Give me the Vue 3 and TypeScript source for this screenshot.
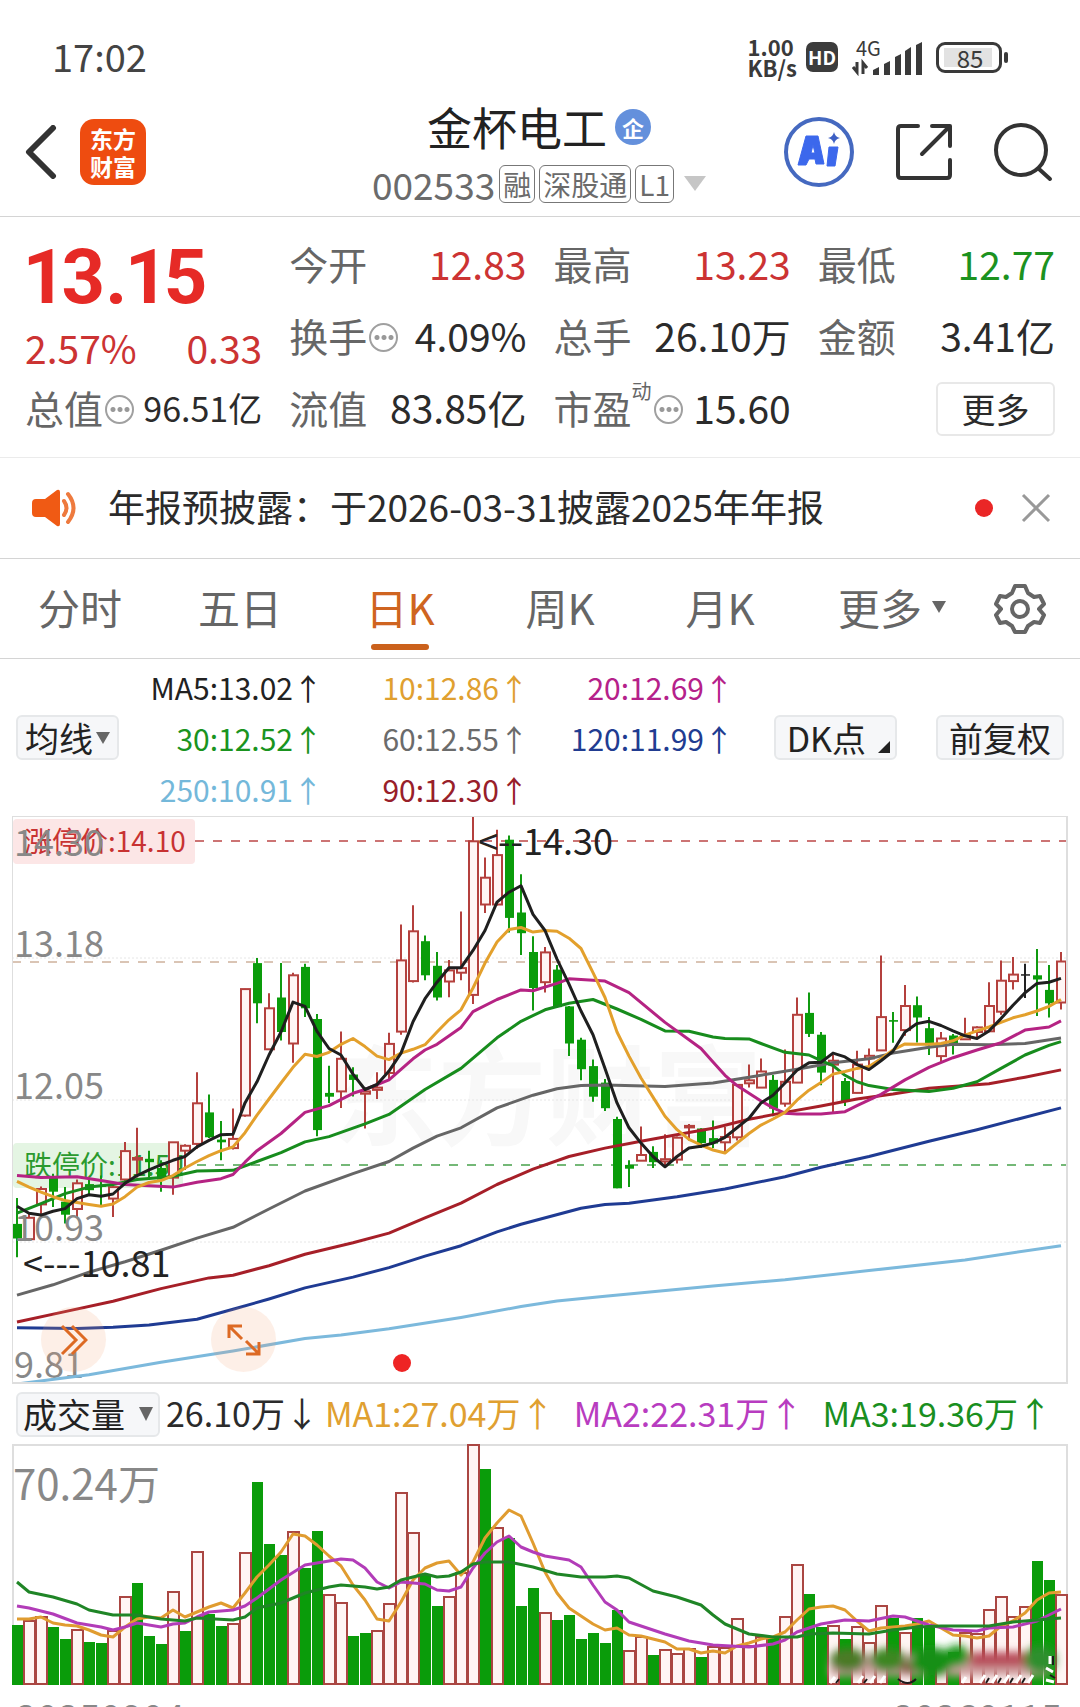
<script setup lang="ts">
type Candle = [number, number, number, number, 'r' | 'g' | 'k']
type Pt = [number, number]

const STEP = 12
const FIRST = 5

// Candle rows: high, body top, body bottom, low, kind (in plot units, 41 = top edge, 1524 = bottom edge)
const candles: Candle[] = [
  [1038, 1106, 1144, 1193, 'g'], [1075, 1090, 1146, 1148, 'r'], [1008, 1015, 1055, 1080, 'r'], [975, 985, 1022, 1062, 'g'],
  [1010, 1048, 1082, 1105, 'g'], [990, 1000, 1067, 1090, 'r'], [985, 1002, 1018, 1030, 'g'], [980, 1005, 1009, 1058, 'g'],
  [1005, 1010, 1040, 1088, 'r'], [892, 916, 990, 1000, 'r'], [855, 934, 938, 985, 'r'], [915, 936, 945, 985, 'g'],
  [940, 960, 990, 1022, 'g'], [892, 893, 985, 1030, 'r'], [898, 902, 915, 965, 'r'], [710, 791, 897, 910, 'r'],
  [768, 815, 880, 882, 'g'], [837, 886, 893, 940, 'g'], [805, 884, 908, 912, 'r'], [492, 493, 823, 826, 'r'],
  [412, 425, 530, 582, 'g'], [504, 543, 650, 652, 'r'], [425, 515, 605, 627, 'g'], [450, 457, 635, 685, 'r'],
  [427, 435, 543, 566, 'g'], [558, 571, 861, 877, 'g'], [693, 764, 774, 790, 'g'], [604, 675, 760, 803, 'r'],
  [697, 716, 730, 773, 'g'], [755, 760, 766, 857, 'r'], [710, 750, 756, 780, 'r'], [607, 636, 712, 730, 'r'],
  [324, 418, 604, 612, 'r'], [274, 342, 472, 476, 'r'], [353, 368, 457, 470, 'g'], [396, 432, 515, 523, 'g'],
  [417, 444, 473, 514, 'r'], [290, 438, 450, 470, 'r'], [41, 107, 508, 532, 'r'], [149, 202, 272, 294, 'r'],
  [77, 143, 272, 275, 'r'], [92, 103, 307, 345, 'g'], [193, 293, 347, 404, 'g'], [355, 396, 490, 549, 'g'],
  [383, 397, 475, 502, 'r'], [430, 442, 540, 541, 'g'], [537, 538, 635, 668, 'g'], [620, 625, 702, 731, 'g'],
  [677, 694, 774, 787, 'g'], [728, 737, 804, 811, 'g'], [826, 832, 1013, 1013, 'g'], [940, 952, 962, 1010, 'g'],
  [852, 926, 941, 941, 'r'], [903, 918, 945, 960, 'g'], [872, 937, 943, 955, 'r'], [878, 881, 938, 948, 'r'],
  [845, 850, 854, 888, 'r'], [856, 857, 895, 908, 'g'], [836, 882, 896, 908, 'g'], [853, 879, 893, 918, 'r'],
  [742, 743, 880, 888, 'r'], [690, 731, 739, 750, 'r'], [674, 708, 750, 751, 'r'], [717, 730, 805, 825, 'g'],
  [651, 735, 792, 800, 'r'], [515, 560, 737, 738, 'r'], [502, 555, 610, 618, 'g'], [605, 612, 711, 744, 'g'],
  [665, 680, 690, 815, 'r'], [725, 733, 787, 798, 'g'], [654, 690, 764, 765, 'r'], [648, 667, 674, 695, 'r'],
  [405, 566, 653, 654, 'r'], [553, 574, 578, 633, 'g'], [482, 537, 600, 615, 'r'], [512, 535, 567, 632, 'g'],
  [566, 595, 640, 665, 'g'], [605, 622, 668, 684, 'r'], [610, 614, 640, 664, 'g'], [568, 612, 624, 626, 'r'],
  [590, 593, 605, 624, 'r'], [475, 537, 603, 605, 'r'], [418, 471, 552, 560, 'r'], [409, 455, 472, 494, 'r'],
  [427, 454, 458, 516, 'k'], [388, 457, 468, 563, 'g'], [430, 495, 530, 567, 'g'], [396, 421, 528, 546, 'r'],
]

const seq = (vals: number[]): Pt[] => vals.map((v, i): Pt => [i, v])

const averages: { color: string; pts: Pt[] }[] = [
  { color: '#7cb9dc', pts: [[0, 1524], [6, 1500], [12, 1467], [18, 1438], [24, 1405], [27, 1396], [31, 1380], [37, 1350], [42, 1322], [45, 1307], [49, 1295], [58, 1268], [64, 1252], [71, 1228], [79, 1200], [87, 1163]] },
  { color: '#1f3b93', pts: [[0, 1377], [5, 1379], [8, 1376], [11, 1370], [15, 1355], [18, 1329], [21, 1302], [24, 1273], [28, 1245], [31, 1220], [34, 1190], [37, 1163], [40, 1127], [42, 1107], [47, 1065], [49, 1055], [51, 1052], [55, 1035], [59, 1015], [64, 983], [67, 958], [71, 930], [76, 890], [80, 860], [87, 803]] },
  { color: '#a61f28', pts: [[0, 1362], [4, 1335], [8, 1308], [12, 1275], [16, 1247], [18, 1240], [21, 1215], [24, 1185], [28, 1155], [31, 1130], [34, 1090], [37, 1052], [40, 1003], [43, 963], [46, 930], [49, 908], [52, 890], [56, 867], [58, 856], [61, 833], [64, 815], [67, 798], [70, 780], [73, 767], [76, 752], [81, 740], [84, 723], [87, 704]] },
  { color: '#666666', pts: [[0, 1292], [3, 1265], [6, 1232], [9, 1205], [12, 1175], [15, 1143], [18, 1115], [21, 1067], [24, 1020], [28, 975], [31, 943], [33, 908], [35, 877], [37, 855], [40, 803], [43, 770], [45, 753], [47, 745], [49, 743], [54, 747], [58, 738], [61, 723], [65, 702], [68, 685], [71, 675], [73, 660], [76, 645], [78, 637], [81, 638], [84, 635], [87, 621]] },
  { color: '#178c1d', pts: [[0, 1078], [2, 1053], [4, 1027], [6, 1010], [8, 1003], [10, 990], [12, 985], [13, 982], [15, 968], [18, 966], [20, 943], [22, 920], [24, 892], [26, 878], [29, 845], [31, 820], [34, 755], [37, 700], [40, 620], [42, 577], [44, 547], [46, 530], [48, 520], [50, 545], [52, 572], [54, 602], [56, 603], [58, 618], [59, 622], [61, 623], [62, 635], [64, 658], [66, 665], [67, 680], [68, 693], [69, 718], [70, 735], [71, 745], [73, 755], [76, 760], [78, 752], [80, 735], [82, 700], [84, 665], [86, 640], [87, 630]] },
  { color: '#b52383', pts: [[0, 980], [2, 985], [5, 983], [7, 993], [9, 1003], [13, 1010], [15, 997], [17, 988], [18, 977], [19, 945], [20, 915], [22, 870], [24, 815], [26, 797], [28, 765], [29, 755], [31, 730], [33, 675], [34, 652], [35, 637], [37, 593], [38, 552], [40, 520], [42, 495], [43, 497], [45, 478], [46, 466], [49, 472], [51, 502], [54, 580], [56, 625], [57, 648], [58, 683], [59, 718], [60, 745], [61, 765], [62, 785], [63, 803], [64, 817], [65, 819], [67, 819], [69, 813], [70, 797], [72, 768], [74, 730], [76, 697], [78, 672], [80, 652], [82, 633], [84, 600], [86, 592], [87, 576]] },
  { color: '#e3a02c', pts: seq([995, 1010, 1023, 1035, 1045, 1050, 1055, 1060, 1054, 1035, 1010, 998, 993, 980, 960, 943, 928, 915, 905, 868, 822, 780, 738, 697, 663, 669, 658, 637, 622, 643, 668, 677, 660, 650, 638, 605, 573, 547, 490, 425, 370, 337, 332, 344, 340, 342, 360, 387, 450, 515, 605, 668, 725, 775, 825, 860, 885, 900, 913, 921, 895, 870, 848, 832, 815, 783, 757, 737, 715, 708, 700, 695, 675, 652, 636, 637, 637, 635, 628, 613, 602, 592, 580, 568, 560, 550, 538, 520]) },
  { color: '#1f1f1f', pts: seq([1060, 1078, 1083, 1073, 1066, 1040, 1030, 1034, 1028, 1000, 980, 965, 952, 940, 930, 905, 888, 873, 872, 790, 735, 665, 605, 527, 538, 603, 648, 665, 715, 755, 742, 707, 660, 578, 518, 475, 437, 437, 392, 340, 266, 240, 223, 298, 340, 415, 480, 550, 612, 700, 790, 855, 895, 930, 957, 930, 908, 903, 895, 880, 855, 830, 790, 770, 738, 705, 685, 684, 660, 670, 690, 703, 680, 655, 605, 583, 577, 588, 602, 615, 622, 602, 570, 535, 503, 478, 475, 465]) },
]

const volumes =
  'g735 r722 r712 g740 g778 r750 g787 g790 r752 r650 g610 g768 g792 r637 g753 r517 g703 g737 r732 r520 g305 g492 g525 r457 g565 g453 r646 r669 g768 g758 r752 r673 r338 r460 g582 g678 r650 r580 r195 g267 r444 g473 g678 g625 r700 g721 g705 g778 g758 g790 g690 r813 r770 g825 r810 r823 r808 g832 r800 r805 r718 r797 r772 g770 r710 r554 g641 g740 r737 g778 r740 r790 r679 g715 r760 g714 g738 r850 g815 r760 r763 r690 r650 r712 r682 g543 g600 r645'
    .split(' ')
    .map((s) => ({ up: s[0] === 'r', v: Number(s.slice(1)) }))

const volumeLines: { color: string; pts: Pt[] }[] = [
  { color: '#e09c30', pts: seq([717, 716, 710, 730, 735, 738, 750, 765, 770, 740, 718, 712, 713, 690, 710, 695, 682, 670, 685, 640, 590, 555, 515, 462, 468, 495, 527, 557, 615, 660, 716, 724, 665, 600, 563, 548, 542, 585, 545, 475, 430, 390, 408, 490, 575, 638, 683, 707, 732, 749, 743, 765, 768, 777, 785, 806, 808, 820, 814, 818, 797, 790, 778, 770, 755, 720, 687, 682, 677, 690, 722, 752, 745, 740, 737, 732, 723, 745, 765, 769, 774, 767, 738, 722, 700, 660, 640, 635]) },
  { color: '#b23cb8', pts: [[0, 679], [1, 683], [3, 702], [5, 728], [7, 742], [8, 750], [9, 742], [10, 730], [12, 740], [13, 732], [14, 728], [15, 710], [16, 697], [18, 690], [19, 678], [20, 655], [22, 600], [24, 555], [26, 543], [27, 536], [28, 540], [29, 565], [30, 607], [31, 624], [32, 607], [34, 612], [35, 630], [36, 632], [37, 622], [38, 565], [39, 520], [40, 487], [41, 467], [42, 500], [43, 515], [44, 528], [46, 540], [47, 560], [48, 615], [49, 667], [50, 690], [51, 725], [52, 738], [54, 762], [56, 782], [58, 795], [61, 800], [63, 792], [64, 780], [65, 757], [67, 732], [69, 720], [71, 722], [73, 708], [74, 712], [76, 735], [78, 750], [80, 752], [81, 745], [83, 740], [85, 722], [87, 687]] },
  { color: '#1f8526', pts: [[0, 607], [1, 635], [3, 652], [5, 672], [6, 690], [8, 706], [10, 705], [12, 717], [14, 723], [15, 715], [18, 720], [19, 710], [20, 685], [22, 668], [23, 655], [24, 640], [26, 622], [27, 614], [29, 620], [30, 627], [31, 622], [32, 600], [33, 592], [34, 582], [35, 590], [36, 588], [37, 577], [38, 553], [39, 545], [41, 547], [43, 560], [45, 582], [47, 590], [49, 592], [50, 588], [51, 595], [53, 632], [55, 652], [57, 675], [58, 705], [59, 732], [61, 762], [63, 770], [65, 770], [66, 763], [68, 758], [71, 762], [73, 750], [75, 740], [77, 738], [81, 738], [83, 725], [85, 720], [87, 715]] },
]

const cx = (i: number) => FIRST + i * STEP
const py = (v: number) => Math.round(((v - 41) * 568) / 148.3) / 10
const vy = (v: number) => Math.round((v - 192) / 3)
const path = (pts: Pt[], fy: (v: number) => number) => pts.map(([i, v]) => `${cx(i)},${fy(v)}`).join(' ')

const tabs = ['分时', '五日', '日K', '周K', '月K', '更多']
const maItems = [
  { text: 'MA5:13.02', color: '#222222' },
  { text: '10:12.86', color: '#e0a030' },
  { text: '20:12.69', color: '#b5218a' },
  { text: '30:12.52', color: '#1a941f' },
  { text: '60:12.55', color: '#6b6b6b' },
  { text: '120:11.99', color: '#213c91' },
  { text: '250:10.91', color: '#74b8da' },
  { text: '90:12.30', color: '#98202a' },
]
</script>

<template>
  <div class="app">
    <header class="status">
      <span class="clock">17:02</span>
      <div class="status-right">
        <span class="speed">1.00<br />KB/s</span>
        <span class="hd">HD</span>
        <svg class="signal" width="70" height="38" viewBox="0 0 70 38" aria-hidden="true">
          <text x="4" y="18" font-size="20" fill="#3a3a3a">4G</text>
          <path d="M5 24v10l-4-5M11 36V25l4 5" fill="none" stroke="#3a3a3a" stroke-width="3" />
          <path d="M21 32l6-3v8h-6zM32 26l6-3v14h-6zM43 19l6-3v21h-6zM53 13l6-4v28h-6zM64 7l6-3v33h-6z" fill="#3a3a3a" />
        </svg>
        <div class="battery"><span>85</span></div>
      </div>
    </header>

    <nav class="head">
      <div class="head-left">
        <button class="plain" aria-label="返回">
          <svg width="32" height="54" viewBox="0 0 32 54"><path d="M28 3L4 27l24 24" fill="none" stroke="#333" stroke-width="6" stroke-linecap="round" stroke-linejoin="round" /></svg>
        </button>
        <div class="logo">东方<br />财富</div>
      </div>
      <div class="title">
        <h1>金杯电工<span class="ent">企</span></h1>
        <div class="code">
          <span class="num">002533</span><span class="tag">融</span><span class="tag">深股通</span><span class="tag">L1</span>
          <svg width="22" height="16" viewBox="0 0 22 16"><path d="M0 0h22L11 15z" fill="#c6c6c6" /></svg>
        </div>
      </div>
      <div class="head-right">
        <button class="plain" aria-label="Ai">
          <svg width="72" height="72" viewBox="0 0 72 72">
            <circle cx="36" cy="36" r="33" fill="#fff" stroke="#4569c0" stroke-width="4" />
            <path fill-rule="evenodd" d="M23 20h12l6 28h-8l-1-5h-6l-3 6h-8zM30 29l-2 8h4z" fill="#3c68ec" stroke="#3c68ec" stroke-width="1" stroke-linejoin="round" />
            <path d="M46 31h9l-3 19h-8z" fill="#3c68ec" stroke="#3c68ec" stroke-linejoin="round" />
            <path d="M51 16q1 5 6 6-5 1-6 6-1-5-6-6 5-1 6-6z" fill="#3d5fc4" />
          </svg>
        </button>
        <button class="plain" aria-label="分享">
          <svg width="58" height="58" viewBox="0 0 58 58" fill="none" stroke="#333" stroke-width="4" stroke-linecap="round" stroke-linejoin="round">
            <path d="M23 3H6Q3 3 3 6v46q0 3 3 3h46q3 0 3-3V37M37 3h18v20M54 4L27 31" />
          </svg>
        </button>
        <button class="plain" aria-label="搜索">
          <svg width="60" height="60" viewBox="0 0 60 60" fill="none" stroke="#333" stroke-width="4" stroke-linecap="round">
            <circle cx="28" cy="28" r="25" /><path d="M46 47l11 10" />
          </svg>
        </button>
      </div>
    </nav>

    <section class="quote">
      <div class="price">
        <strong>13.15</strong>
        <div class="pair red"><span>2.57%</span><span>0.33</span></div>
      </div>
      <div class="cell"><span class="name">今开</span><b class="red">12.83</b></div>
      <div class="cell"><span class="name">最高</span><b class="red">13.23</b></div>
      <div class="cell"><span class="name">最低</span><b class="green">12.77</b></div>
      <div class="cell"><span class="name">换手</span><i class="dots"></i><b>4.09%</b></div>
      <div class="cell"><span class="name">总手</span><b>26.10万</b></div>
      <div class="cell"><span class="name">金额</span><b>3.41亿</b></div>
      <div class="cell"><span class="name">总值</span><i class="dots"></i><b class="small">96.51亿</b></div>
      <div class="cell"><span class="name">流值</span><b>83.85亿</b></div>
      <div class="cell"><span class="name">市盈</span><sup>动</sup><i class="dots"></i><b>15.60</b></div>
      <div class="cell end"><button class="more">更多</button></div>
    </section>

    <section class="notice">
      <svg width="46" height="38" viewBox="0 0 46 38">
        <path d="M4 10h9L25 1q3-1 3 2v32q0 3-3 2L13 28H4q-4 0-4-4V14q0-4 4-4z" fill="#f05a14" />
        <path d="M32 12q5 7 0 14M36 5q11 14 0 28" fill="none" stroke="#ee7a3e" stroke-width="4" stroke-linecap="round" />
      </svg>
      <a href="#">年报预披露：于2026-03-31披露2025年年报</a>
      <span class="reddot"></span>
      <button class="plain" aria-label="关闭">
        <svg width="30" height="30" viewBox="0 0 30 30"><path d="M2 2l26 26M28 2L2 28" stroke="#999" stroke-width="3" /></svg>
      </button>
    </section>

    <nav class="tabs">
      <button v-for="(t, i) in tabs" :key="t" class="tab" :class="{ on: i === 2 }">
        {{ t }}<svg v-if="i === 5" width="14" height="12" viewBox="0 0 14 12"><path d="M0 0h14L7 12z" fill="#666" /></svg>
      </button>
      <button class="plain gear" aria-label="设置">
        <svg width="54" height="54" viewBox="-27 -27 54 54" fill="none" stroke="#666" stroke-width="4" stroke-linejoin="round">
          <path d="M-5-23H5L8-16 14-12 20-13 24-5 19 0 24 6 20 14 14 13 8 17 5 23H-5L-8 17-14 13-20 14-24 6-19 0-24-5-20-13-14-12-8-16z" />
          <circle r="8" />
        </svg>
      </button>
    </nav>

    <section class="ma">
      <button class="chip avg">均线<svg width="14" height="12" viewBox="0 0 14 12"><path d="M0 0h14L7 12z" fill="#666" /></svg></button>
      <div class="ma-grid">
        <span v-for="m in maItems" :key="m.text" :style="{ color: m.color }">{{ m.text }}↑</span>
      </div>
      <button class="chip dk">DK点<svg width="12" height="12" viewBox="0 0 12 12"><path d="M12 0v12H0z" fill="#222" /></svg></button>
      <button class="chip">前复权</button>
    </section>

    <section class="plot">
      <svg class="kline" viewBox="0 0 1056 568">
        <rect x="0" y="0" width="1055" height="567" fill="#fff" />
        <text x="318" y="321" font-size="108" font-weight="700" fill="#f8f8f8">东方财富</text>
        <g stroke="#e6e6e6" stroke-width="1" stroke-dasharray="2 2">
          <path d="M0 142H1055M0 284H1055M0 426H1055" />
        </g>
        <rect x="1" y="3" width="182" height="45" rx="4" fill="#fce6e6" />
        <rect x="1" y="327" width="170" height="45" rx="4" fill="#e4f5e3" />
        <path d="M183 25H1055" stroke="#cc7474" stroke-width="2" stroke-dasharray="9 9" />
        <path d="M0 146H1055" stroke="#b58a6a" stroke-width="1" stroke-dasharray="9 9" />
        <path d="M185 349H1055" stroke="#74b877" stroke-width="2" stroke-dasharray="9 9" />
        <text x="12" y="36" font-size="28" fill="#c83232">涨停价:14.10</text>
        <text x="12" y="360" font-size="28" fill="#2a9a2e">跌停价:11.54</text>
        <g v-for="(c, i) in candles" :key="i">
          <template v-if="c[4] === 'r'">
            <path :d="`M${cx(i)} ${py(c[0])}V${py(c[1])}M${cx(i)} ${py(c[2])}V${py(c[3])}`" stroke="#b4403d" stroke-width="2" />
            <rect :x="cx(i) - 4" :y="py(c[1])" width="9" :height="py(c[2]) - py(c[1])" fill="#fff5f4" stroke="#b4403d" stroke-width="2" />
          </template>
          <template v-else>
            <path :d="`M${cx(i)} ${py(c[0])}V${py(c[3])}`" :stroke="c[4] === 'k' ? '#222' : '#109a10'" stroke-width="2" />
            <rect :x="cx(i) - 4" :y="py(c[1])" width="9" :height="py(c[2]) - py(c[1])" :fill="c[4] === 'k' ? '#222' : '#0a9c0a'" />
          </template>
        </g>
        <g class="axis">
          <text x="2" y="40">14.30</text>
          <text x="2" y="141">13.18</text>
          <text x="2" y="283">12.05</text>
          <text x="2" y="425">10.93</text>
          <text x="2" y="562">9.81</text>
        </g>
        <polyline v-for="a in averages" :key="a.color" class="curve" :points="path(a.pts, py)" :stroke="a.color" />
        <text class="mark" x="466" y="39">&lt;--14.30</text>
        <text class="mark" x="11" y="461">&lt;---10.81</text>
        <circle cx="390" cy="547" r="9" fill="#ee2424" />
        <rect x="0" y="0" width="1055" height="567" fill="none" stroke="#dedede" stroke-width="2" />
      </svg>
      <button class="float first" aria-label="快进">
        <svg width="28" height="32" viewBox="0 0 28 32" fill="none" stroke="#dd6a24" stroke-width="3"><path d="M2 2l14 14L2 30M12 2l14 14-14 14" /></svg>
      </button>
      <button class="float second" aria-label="全屏">
        <svg width="36" height="36" viewBox="0 0 36 36" fill="none" stroke="#dd6a24" stroke-width="3"><path d="M3 16V4h13M4 5l12 12M33 20v12H20M32 31L20 19" /></svg>
      </button>
    </section>

    <section class="vol-head">
      <button class="chip vol">成交量<svg width="14" height="14" viewBox="0 0 14 14"><path d="M0 0h14L7 14z" fill="#666" /></svg></button>
      <span>26.10万↓</span>
      <div class="vol-ma">
        <span class="v1">MA1:27.04万↑</span>
        <span class="v2">MA2:22.31万↑</span>
        <span class="v3">MA3:19.36万↑</span>
      </div>
    </section>

    <section class="plot">
      <svg class="volume" viewBox="0 0 1056 241">
        <defs>
          <filter id="smear" x="-20%" y="-50%" width="140%" height="200%"><feGaussianBlur stdDeviation="4" /></filter>
        </defs>
        <path d="M1 241V1H1055V241" fill="none" stroke="#dedede" stroke-width="2" />
        <text x="1" y="56" font-size="42" fill="#888">70.24万</text>
        <template v-for="(b, i) in volumes" :key="i">
          <rect v-if="b.up" :x="cx(i) - 5" :y="vy(b.v)" width="11" :height="240 - vy(b.v)" fill="#fff5f4" stroke="#aa4642" stroke-width="2" />
          <rect v-else :x="cx(i) - 5" :y="vy(b.v)" width="11" :height="241 - vy(b.v)" fill="#0a9c0a" />
        </template>
        <polyline v-for="a in volumeLines" :key="a.color" class="curve" :points="path(a.pts, vy)" :stroke="a.color" />
        <g filter="url(#smear)">
          <rect x="818" y="210" width="218" height="22" fill="#d0a0a0" />
          <ellipse cx="836" cy="216" rx="18" ry="12" fill="#4c7a28" />
          <ellipse cx="876" cy="216" rx="18" ry="12" fill="#3c8620" />
          <ellipse cx="896" cy="224" rx="8" ry="6" fill="#8a5a48" />
          <ellipse cx="920" cy="218" rx="22" ry="15" fill="#178f17" />
          <ellipse cx="945" cy="212" rx="12" ry="11" fill="#129412" />
          <rect x="958" y="208" width="56" height="15" fill="#b84c58" />
          <ellipse cx="1028" cy="216" rx="16" ry="14" fill="#2f8f2f" />
        </g>
        <path d="M818 239l5-6M846 239l5-7M858 239l5-7M868 239l5-7M950 239l4-6M968 239l5-8M980 239l5-8M992 239l5-8M1004 239l5-8M1016 239l5-8M1038 212v8M1034 224l7 4M1034 236l8 2" fill="none" stroke="#fff" stroke-width="3" />
        <path d="M886 235q10 8 18 0M824 239l3-4M852 239l3-4M974 239l3-5M986 239l3-5M998 239l3-5M1010 239l3-5M1041 212v9M1038 231l5 3" fill="none" stroke="#1b1b1b" stroke-width="2" />
      </svg>
    </section>

    <footer class="dates"><span>20250904</span><span>20260115</span></footer>
  </div>
</template>

<style>
body {
  background: #fff;
}
</style>

<style scoped>
.app {
  height: 100vh;
  overflow: hidden;
  background: #fff;
  color: #2b2b2b;
  font-family: 'Noto Sans CJK SC', 'Noto Sans', sans-serif;
  font-size: 39px;
}
button {
  font: inherit;
  color: inherit;
  cursor: pointer;
}
svg {
  display: block;
}
.plain {
  padding: 0;
  border: 0;
  background: none;
}
.status {
  display: flex;
  justify-content: space-between;
  align-items: center;
  box-sizing: border-box;
  height: 90px;
  padding: 24px 78px 0 52px;
}
.clock {
  padding-bottom: 3px;
  color: #444;
  font-size: 38px;
  line-height: 60px;
}
.status-right {
  display: flex;
  align-items: center;
  color: #3a3a3a;
}
.speed {
  font-size: 22px;
  font-weight: 700;
  line-height: 21px;
}
.hd {
  width: 32px;
  margin: 0 14px 0 9px;
  border-radius: 7px;
  background: #3c3c3c;
  color: #fff;
  font-size: 19px;
  font-weight: 700;
  line-height: 30px;
  text-align: center;
}
.battery {
  position: relative;
  box-sizing: border-box;
  width: 66px;
  height: 31px;
  margin-left: 14px;
  border: 3px solid #3a3a3a;
  border-radius: 9px;
  padding: 3px 5px;
  font-size: 24px;
  line-height: 19px;
  text-align: center;
}
.battery span {
  display: block;
  width: 44px;
  background: #e2e2e2;
  padding-left: 4px;
}
.battery::after {
  content: '';
  position: absolute;
  right: -9px;
  top: 7px;
  width: 4px;
  height: 11px;
  border-radius: 2px;
  background: #3a3a3a;
}
.head {
  display: grid;
  grid-template-columns: 1fr auto 1fr;
  align-items: center;
  box-sizing: border-box;
  height: 127px;
  padding: 0 27px 2px 25px;
  border-bottom: 1px solid #d4d4d4;
}
.head-left,
.head-right {
  display: flex;
  align-items: center;
}
.head-left {
  gap: 23px;
}
.head-right {
  justify-content: flex-end;
  gap: 40px;
}
.title {
  padding-top: 4px;
}
.logo {
  box-sizing: border-box;
  width: 66px;
  height: 66px;
  padding-top: 5px;
  border-radius: 14px;
  background: #ee4c10;
  color: #fff;
  font-size: 23px;
  font-weight: 700;
  line-height: 28px;
  text-align: center;
}
h1 {
  display: flex;
  justify-content: center;
  align-items: center;
  gap: 8px;
  margin: 0;
  font-size: 45px;
  font-weight: 400;
  line-height: 60px;
  color: #222;
}
.ent {
  width: 36px;
  border-radius: 50%;
  background: #6490dc;
  color: #fff;
  font-size: 22px;
  font-weight: 700;
  line-height: 36px;
  text-align: center;
}
.code {
  display: flex;
  align-items: center;
  justify-content: center;
  gap: 4px;
  line-height: 54px;
  color: #6b6b6b;
}
.num {
  font-size: 37px;
}
.tag {
  padding: 0 3px;
  border: 1px solid #777;
  border-radius: 6px;
  font-size: 28px;
  line-height: 36px;
}
.code svg {
  margin-left: 6px;
}
.quote {
  display: grid;
  grid-template-columns: repeat(4, 1fr);
  grid-auto-rows: 72px;
  column-gap: 27px;
  padding: 12px 25px;
  border-bottom: 1px solid #ebebeb;
}
.price {
  grid-row: span 2;
}
.price strong {
  display: block;
  font-family: Roboto, sans-serif;
  font-variant-numeric: proportional-nums;
  font-size: 76px;
  font-weight: 700;
  line-height: 96px;
  color: #e62a26;
}
.pair {
  display: flex;
  justify-content: space-between;
  line-height: 44px;
}
.cell {
  display: flex;
  align-items: center;
  white-space: nowrap;
}
.name {
  padding-bottom: 4px;
  color: #666;
}
.cell b {
  margin-left: auto;
  padding-bottom: 4px;
  font-weight: 400;
}
.cell b.small {
  font-size: 34px;
}
.cell sup {
  align-self: flex-start;
  margin-top: 4px;
  font-size: 20px;
  line-height: 28px;
  color: #666;
}
.red,
.cell b.red {
  color: #cc3333;
}
.cell b.green {
  color: #1c921f;
}
.dots {
  box-sizing: border-box;
  width: 29px;
  height: 29px;
  margin-left: 2px;
  border: 2px solid #a0a0a0;
  border-radius: 50%;
  background:
    radial-gradient(circle at 6px 50%, #999 2px, transparent 3px),
    radial-gradient(circle at 13px 50%, #999 2px, transparent 3px),
    radial-gradient(circle at 20px 50%, #999 2px, transparent 3px);
}
.end {
  justify-content: flex-end;
}
.more {
  width: 119px;
  height: 54px;
  padding: 0;
  border: 2px solid #e8e8e8;
  border-radius: 6px;
  background: #fff;
  font-size: 34px;
  line-height: 48px;
}
.notice {
  display: flex;
  align-items: center;
  height: 100px;
  padding: 0 29px 0 32px;
  border-bottom: 1px solid #d4d4d4;
}
.notice a {
  margin-left: 30px;
  padding-bottom: 4px;
  color: inherit;
  font-size: 37px;
  text-decoration: none;
}
.reddot {
  width: 18px;
  height: 18px;
  margin: 0 28px 0 auto;
  border-radius: 50%;
  background: #ea2626;
}
.tabs {
  display: grid;
  grid-template-columns: repeat(6, 4fr) 3fr;
  align-items: center;
  height: 99px;
  border-bottom: 1px solid #d4d4d4;
}
.tab {
  position: relative;
  display: flex;
  align-items: center;
  justify-content: center;
  height: 99px;
  padding: 0 0 4px;
  border: 0;
  background: none;
  font-size: 42px;
  color: #666;
}
.tab svg {
  margin: 0 -24px 0 10px;
}
.gear svg {
  margin: 0 auto;
}
.tab.on {
  color: #cf6420;
}
.tab.on::after {
  content: '';
  position: absolute;
  left: calc(50% - 29px);
  bottom: 8px;
  width: 58px;
  height: 6px;
  border-radius: 3px;
  background: #cb611c;
}
.ma {
  display: flex;
  align-items: center;
  height: 157px;
  padding: 0 16px;
}
.ma-grid {
  display: grid;
  grid-template-columns: 204px 206px 205px;
  grid-auto-rows: 51px;
  align-items: center;
  margin-right: auto;
  font-size: 30px;
  line-height: 50px;
  text-align: right;
}
.chip {
  display: flex;
  align-items: center;
  justify-content: center;
  gap: 3px;
  box-sizing: border-box;
  height: 45px;
  padding: 0 11px;
  border: 2px solid #e6e8ea;
  border-radius: 6px;
  background: #f6f7f9;
  color: #222;
  font-size: 34px;
  line-height: 38px;
  white-space: nowrap;
}
.chip.avg {
  padding: 0 7px;
}
.chip.dk {
  margin-right: 39px;
  padding: 0 5px 0 11px;
  gap: 12px;
}
.chip.dk svg {
  align-self: flex-end;
  margin-bottom: 5px;
}
.plot {
  position: relative;
  padding: 0 12px;
}
.kline,
.volume {
  width: 100%;
  height: auto;
}
.curve {
  fill: none;
  stroke-width: 3px;
  stroke-linejoin: round;
}
.axis {
  font-size: 36px;
  fill: #888;
}
.mark {
  font-size: 36px;
  fill: #222;
}
.float {
  position: absolute;
  bottom: 12px;
  display: flex;
  align-items: center;
  justify-content: center;
  width: 65px;
  height: 65px;
  padding: 0;
  border: 0;
  border-radius: 50%;
  background: rgba(246, 160, 110, 0.17);
}
.first {
  left: 41px;
}
.second {
  left: 211px;
}
.vol-head {
  display: flex;
  align-items: center;
  gap: 6px;
  height: 60px;
  padding: 0 28px 0 16px;
  font-size: 34px;
  white-space: nowrap;
}
.vol-head span {
  padding-bottom: 3px;
}
.vol-ma {
  display: flex;
  flex: 1;
  justify-content: space-between;
}
.chip.vol {
  width: 144px;
  padding: 0 4px;
  gap: 14px;
}
.v1 {
  color: #e0a030;
}
.v2 {
  color: #b83cc0;
}
.v3 {
  color: #1a8f1f;
}
.dates {
  display: flex;
  justify-content: space-between;
  padding: 3px 18px 0 16px;
  font-size: 38px;
  line-height: 56px;
  color: #888;
}
</style>
